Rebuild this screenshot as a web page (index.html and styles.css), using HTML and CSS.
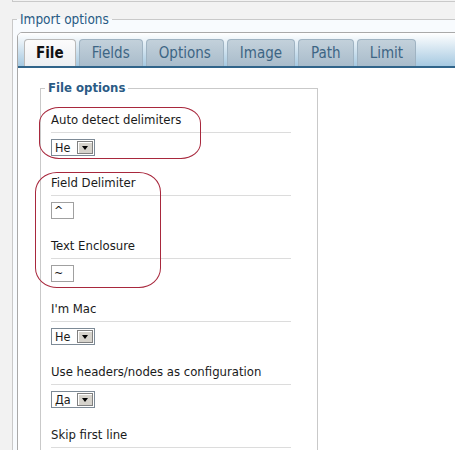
FILE: index.html
```html
<!DOCTYPE html>
<html lang="ru">
<head>
    <meta charset="UTF-8">
    <meta name="viewport" content="width=device-width, initial-scale=1.0">
    <title>Import options</title>
    <link rel="stylesheet" href="styles.css">
</head>
<body>
    <div class="page">
        <div class="top-box"></div>
        <fieldset class="group">
            <legend>Import options</legend>
            <div class="tabs">
                <ul class="tab-nav">
                    <li class="tab active">File</li>
                    <li class="tab">Fields</li>
                    <li class="tab">Options</li>
                    <li class="tab">Image</li>
                    <li class="tab">Path</li>
                    <li class="tab">Limit</li>
                </ul>
                <div class="tab-panel">
                    <fieldset class="subgroup">
                        <legend>File options</legend>
                        <div class="row">
                            <div class="row-label">Auto detect delimiters</div>
                            <div class="select"><span class="select-value">Не</span><span class="select-btn"></span></div>
                        </div>
                        <div class="row">
                            <div class="row-label">Field Delimiter</div>
                            <input class="char-input" type="text" value="^">
                        </div>
                        <div class="row">
                            <div class="row-label">Text Enclosure</div>
                            <input class="char-input" type="text" value="~">
                        </div>
                        <div class="row">
                            <div class="row-label">I'm Mac</div>
                            <div class="select"><span class="select-value">Не</span><span class="select-btn"></span></div>
                        </div>
                        <div class="row">
                            <div class="row-label">Use headers/nodes as configuration</div>
                            <div class="select"><span class="select-value">Да</span><span class="select-btn"></span></div>
                        </div>
                        <div class="row">
                            <div class="row-label">Skip first line</div>
                        </div>
                    </fieldset>
                </div>
            </div>
        </fieldset>

        <!-- red hand-drawn highlights -->
        <div class="mark mark-auto"></div>
        <div class="mark mark-delims"></div>
    </div>
</body>
</html>
```

FILE: styles.css
```css
html, body {
    margin: 0;
    padding: 0;
    overflow: hidden;
}

body {
    background-color: #f2f2f2;
    font-family: "DejaVu Sans Condensed", "DejaVu Sans", Verdana, sans-serif;
    font-size: 13px;
    color: #1a1a1a;
}

.page {
    position: relative;
    width: 455px;
    height: 450px;
    overflow: hidden;
}

.top-box {
    margin-left: 12px;
    height: 1px;
    border-left: 1px solid #c9c9c9;
    border-bottom: 1px solid #c9c9c9;
}

/* outer group */
.group {
    width: 700px;
    height: 500px;
    margin: 9px 0 0 12px;
    padding: 5px 0 0 4px;
    border: 1px solid #c9c9c9;
    background-color: #f8fbfe;
    min-width: 0;
}

.group > legend {
    padding: 0 3px;
    font-size: 13.5px;
    line-height: 16px;
    color: #285a84;
}

/* tabs */
.tabs {
    border: 1px solid #a9a9a9;
    border-radius: 5px 5px 0 0;
    background: white;
}

.tab-nav {
    display: flex;
    gap: 3px;
    margin: 0;
    padding: 6px 0 0 6px;
    list-style: none;
    border-radius: 4px 4px 0 0;
    border-bottom: 2px solid #30648a;
    background: linear-gradient(#ffffff, #a6c9e1);
}

.tab {
    height: 27px;
    box-sizing: border-box;
    padding: 0 12px;
    border: 1px solid #9fb3c2;
    border-bottom: none;
    border-radius: 4px 4px 0 0;
    background: linear-gradient(#c3d1db, #a9bccb);
    color: #3d6584;
    font-size: 15px;
    line-height: 26px;
}

.tab.active {
    padding: 0 11px;
    border-color: #b9b9b9;
    background: linear-gradient(#fcfcfc, #eceff2);
    color: #111;
    font-weight: bold;
}

.tab-panel {
    height: 400px;
    padding: 12px 0 0 22px;
    background: white;
}

/* inner group */
.subgroup {
    box-sizing: border-box;
    width: 278px;
    height: 420px;
    margin: 0;
    padding: 16px 25px 0 10px;
    border: 1px solid #c9c9c9;
    min-width: 0;
}

.subgroup > legend {
    margin-left: -6px;
    padding: 0 3px;
    line-height: 16px;
    font-weight: bold;
    color: #2b5b85;
}

.row {
    width: 240px;
    margin-bottom: 19px;
}

.row-label {
    line-height: 16px;
    padding-bottom: 4px;
    margin-bottom: 6px;
    border-bottom: 1px solid #dcdcdc;
    white-space: nowrap;
}

.select {
    display: flex;
    align-items: center;
    justify-content: space-between;
    width: 44px;
    height: 17px;
    box-sizing: border-box;
    border: 1px solid #7d8a96;
    background: white;
}

.select-value {
    padding-left: 3px;
    font-size: 12.5px;
    line-height: 15px;
}

.select-btn {
    display: flex;
    align-items: center;
    justify-content: center;
    width: 16px;
    height: 13px;
    margin-right: 1px;
    box-sizing: border-box;
    border: 1px solid #808080;
    background: #d6d3cc;
    box-shadow: inset 1px 1px 0 #ffffff;
}

.select-btn::after {
    content: "";
    border-left: 3px solid transparent;
    border-right: 3px solid transparent;
    border-top: 4px solid #000;
}

.char-input {
    display: block;
    width: 23px;
    height: 17px;
    box-sizing: border-box;
    margin: 0;
    padding: 0 2px;
    border: 1px solid #a0a0a0;
    font-family: "DejaVu Sans", sans-serif;
    font-size: 11px;
    color: #111;
    background: white;
    outline: none;
}

/* highlight marks */
.mark {
    position: absolute;
    box-sizing: border-box;
    border: 1.5px solid #a8283d;
    border-radius: 20px / 16px;
}

.mark-auto {
    left: 39px;
    top: 107px;
    width: 162px;
    height: 52px;
}

.mark-delims {
    left: 35px;
    top: 172px;
    width: 126px;
    height: 116px;
    border-radius: 22px / 20px;
}
```
